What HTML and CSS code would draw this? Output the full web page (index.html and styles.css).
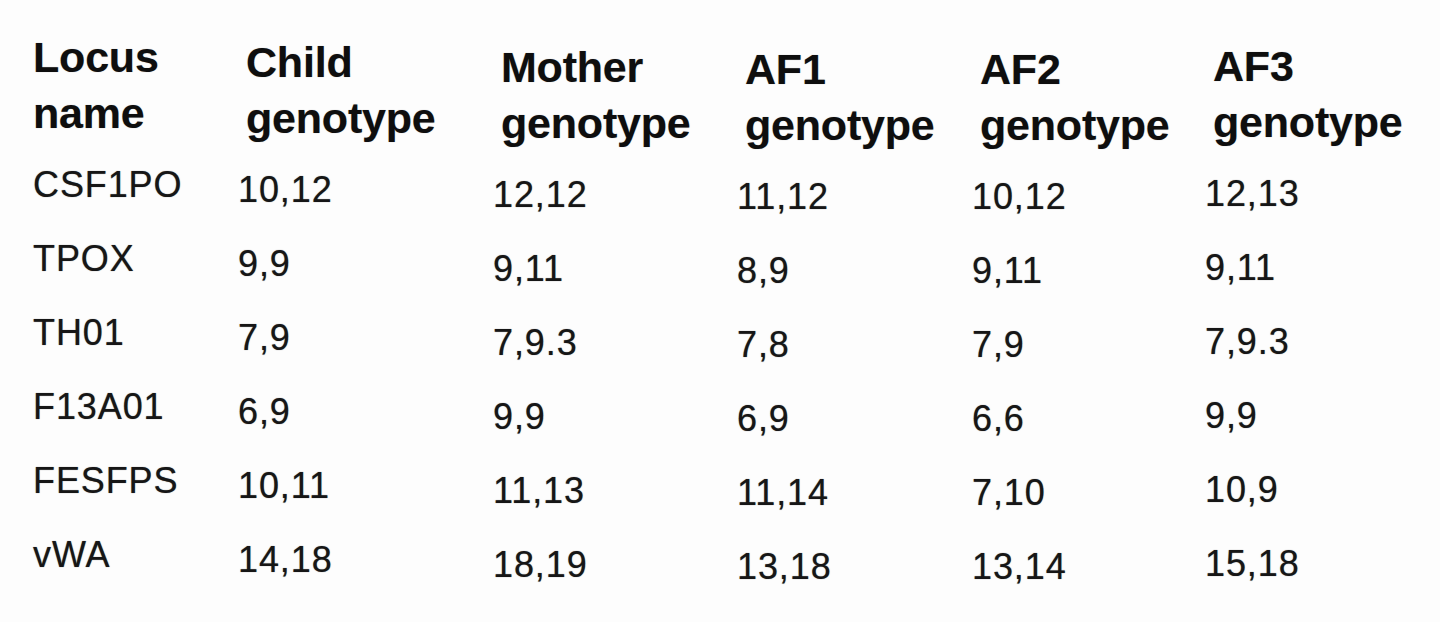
FILE: index.html
```html
<!DOCTYPE html>
<html lang="en">
<head>
<meta charset="utf-8">
<title>Locus genotypes</title>
<link rel="stylesheet" href="styles.css">
</head>
<body>
<main class="sheet">
  <div class="col col-locus">
    <div class="head">Locus<br>name</div>
    <div class="cell">CSF1PO</div>
    <div class="cell">TPOX</div>
    <div class="cell">TH01</div>
    <div class="cell">F13A01</div>
    <div class="cell">FESFPS</div>
    <div class="cell">vWA</div>
  </div>
  <div class="col col-child">
    <div class="head">Child<br>genotype</div>
    <div class="cell">10,12</div>
    <div class="cell">9,9</div>
    <div class="cell">7,9</div>
    <div class="cell">6,9</div>
    <div class="cell">10,11</div>
    <div class="cell">14,18</div>
  </div>
  <div class="col col-mother">
    <div class="head">Mother<br>genotype</div>
    <div class="cell">12,12</div>
    <div class="cell">9,11</div>
    <div class="cell">7,9.3</div>
    <div class="cell">9,9</div>
    <div class="cell">11,13</div>
    <div class="cell">18,19</div>
  </div>
  <div class="col col-af1">
    <div class="head">AF1<br>genotype</div>
    <div class="cell">11,12</div>
    <div class="cell">8,9</div>
    <div class="cell">7,8</div>
    <div class="cell">6,9</div>
    <div class="cell">11,14</div>
    <div class="cell">13,18</div>
  </div>
  <div class="col col-af2">
    <div class="head">AF2<br>genotype</div>
    <div class="cell">10,12</div>
    <div class="cell">9,11</div>
    <div class="cell">7,9</div>
    <div class="cell">6,6</div>
    <div class="cell">7,10</div>
    <div class="cell">13,14</div>
  </div>
  <div class="col col-af3">
    <div class="head">AF3<br>genotype</div>
    <div class="cell">12,13</div>
    <div class="cell">9,11</div>
    <div class="cell">7,9.3</div>
    <div class="cell">9,9</div>
    <div class="cell">10,9</div>
    <div class="cell">15,18</div>
  </div>
</main>
</body>
</html>
```

FILE: styles.css
```css
html, body {
  margin: 0;
  padding: 0;
  background: #fdfdfd;
}

body {
  font-family: "Liberation Sans", Arial, Helvetica, sans-serif;
  color: #161616;
  width: 1440px;
  height: 622px;
  overflow: hidden;
}

.sheet {
  display: flex;
  padding: 29px 0 0 33px;
}

.col {
  display: flex;
  flex-direction: column;
}

.head {
  font-weight: bold;
  font-size: 43px;
  line-height: 56px;
  letter-spacing: -0.2px;
  color: #0e0e0e;
  margin-bottom: 7px;
  white-space: nowrap;
  text-shadow: 0 0 1px rgba(0, 0, 0, 0.35);
}

.cell {
  font-size: 36px;
  line-height: 74px;
  height: 74px;
  letter-spacing: 0.9px;
  white-space: nowrap;
  text-shadow: 0 0 1px rgba(0, 0, 0, 0.55);
}

.col-locus { width: 205px; }
.col-child { width: 255px; padding-top: 5px; }
.col-mother { width: 244px; padding-top: 10px; }
.col-af1 { width: 235px; padding-top: 12px; }
.col-af2 { width: 233px; padding-top: 12px; }
.col-af3 { width: 220px; padding-top: 9px; }

.col-child .head,
.col-mother .head,
.col-af1 .head,
.col-af2 .head,
.col-af3 .head {
  padding-left: 8px;
}
```
